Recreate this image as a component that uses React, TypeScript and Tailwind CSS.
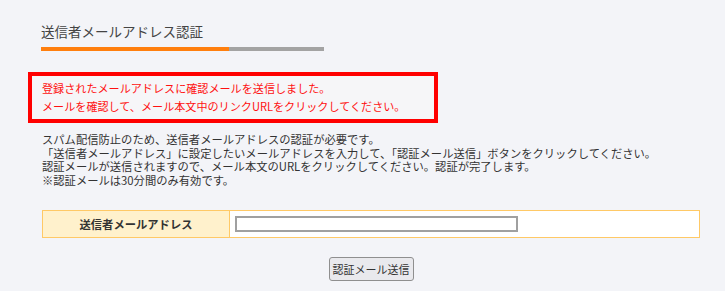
export default function App() {
  return (
    <div
      className="min-h-[291px] w-full bg-[#f3f4f8] text-[#333]"
      style={{ fontFamily: '"Noto Sans CJK JP", "Noto Sans", sans-serif' }}
    >
      <div className="pl-[28px] pr-[25px] pt-[21px]">
        <div className="ml-[13px] w-[283px]">
          <h1 className="text-[13.5px] leading-[20px] font-normal text-[#444]">送信者メールアドレス認証</h1>
          <div className="mt-[6px] flex h-[4px]">
            <div className="w-[188px] bg-[#ff7f0e]" />
            <div className="flex-1 bg-[#a3a3a3]" />
          </div>
        </div>

        <div className="mt-[21px] w-[410px] border-[4px] border-[#ff0000] bg-[#f6f6f8] px-[10px] pt-[3px] pb-[4px] text-[11.1px] leading-[18px] text-[#ff1111]">
          <p>登録されたメールアドレスに確認メールを送信しました。</p>
          <p>メールを確認して、メール本文中のリンクURLをクリックしてください。</p>
        </div>

        <div className="ml-[14px] mt-[10px] text-[11.3px] leading-[13.5px] text-[#333]">
          <p>スパム配信防止のため、送信者メールアドレスの認証が必要です。</p>
          <p>「送信者メールアドレス」に設定したいメールアドレスを入力して、「認証メール送信」ボタンをクリックしてください。</p>
          <p>認証メールが送信されますので、メール本文のURLをクリックしてください。認証が完了します。</p>
          <p>※認証メールは30分間のみ有効です。</p>
        </div>

        <div className="ml-[14px] mt-[23px] w-[658px]">
          <div className="flex h-[28px] border border-[#ffc966]">
            <div className="flex w-[187px] items-center justify-center border-r border-[#ffc966] bg-[#fff1cc] text-[11.3px] font-bold text-[#333]">
              送信者メールアドレス
            </div>
            <div className="flex flex-1 items-center bg-white pl-[5px]">
              <input
                type="text"
                className="h-[16px] w-[283px] border-2 border-[#a0a0a0] bg-white outline-none"
              />
            </div>
          </div>
          <div className="mt-[19px] flex justify-center">
            <button className="h-[24px] rounded-[3px] border border-[#8f8f8f] bg-[#e9e9ed] px-[3px] text-[11px] text-[#333]">
              認証メール送信
            </button>
          </div>
        </div>
      </div>
    </div>
  );
}
